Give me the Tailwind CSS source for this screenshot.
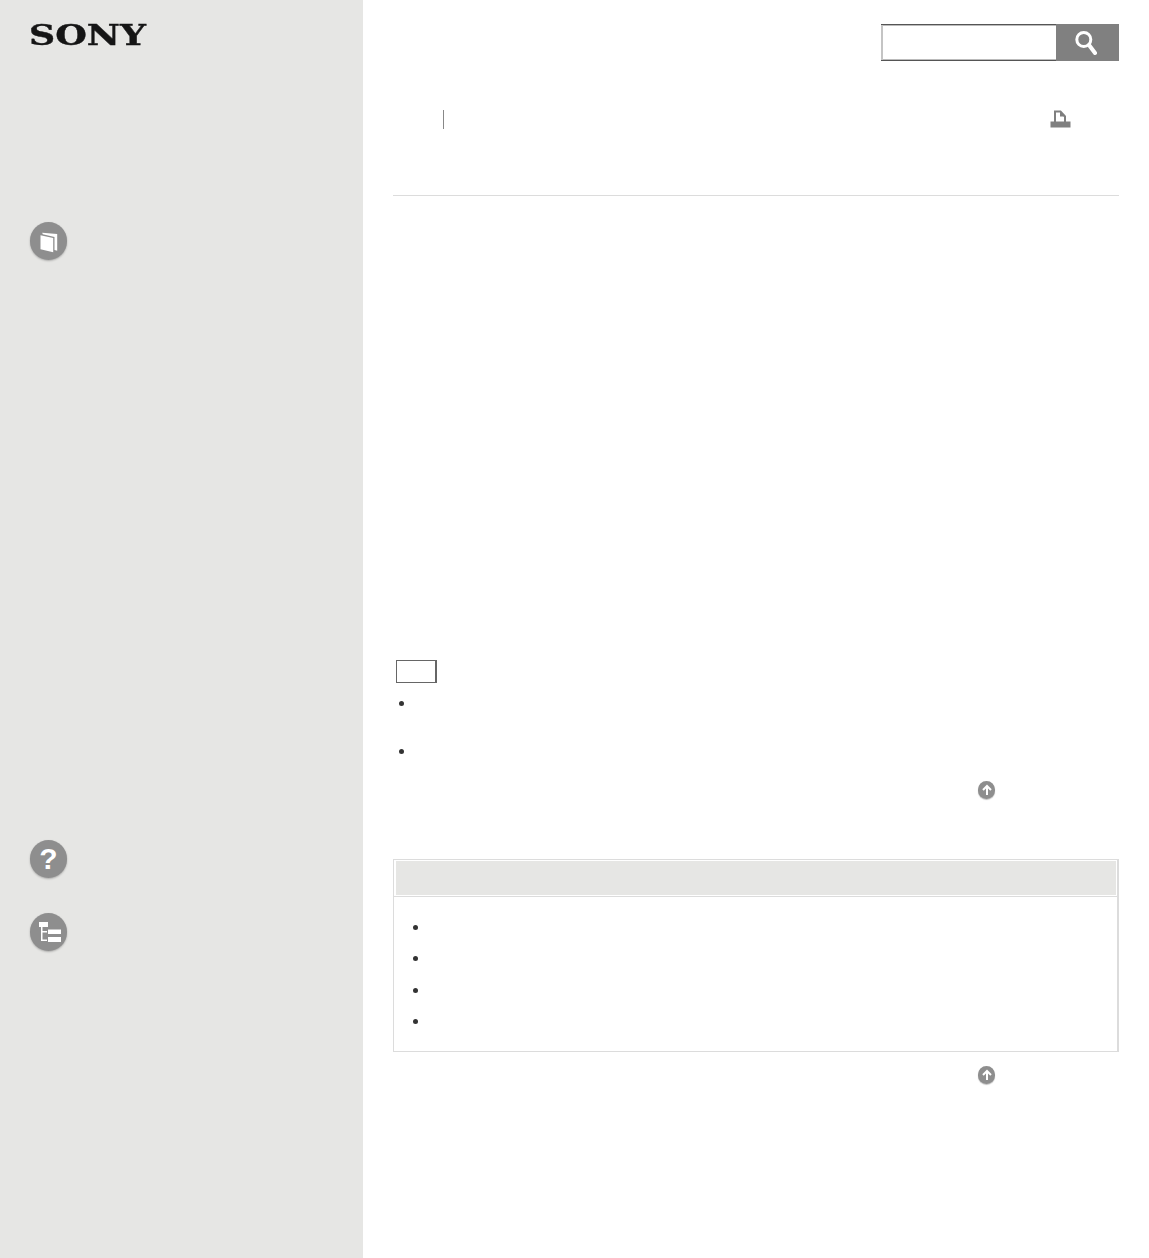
<!DOCTYPE html>
<html lang="en">
  <head>
    <meta charset="UTF-8" />
    <meta name="viewport" content="width=device-width, initial-scale=1.0" />
    <title>Help Guide</title>
    <script src="https://cdn.jsdelivr.net/npm/@tailwindcss/browser@4"></script>
  </head>
  <body class="bg-white">
    <div class="flex h-[1258px] w-[1149px] overflow-hidden">
      <!-- Sidebar -->
      <aside class="w-[363px] shrink-0 bg-[#e6e6e4] pl-[30px] pt-[20px] flex flex-col items-start">
        <div class="-ml-px h-[32px] w-[118px] font-['DejaVu_Serif',serif] font-bold text-[30px] leading-[32px] text-[#151515] origin-left scale-x-[1.21] scale-y-[0.95] blur-[0.3px] [-webkit-text-stroke:0.4px_#151515]">SONY</div>
        <!-- Manual -->
        <div class="mt-[170px] w-[37px] h-[38px] rounded-full bg-[#8e8e8e] shadow-[0_1px_2px_rgba(0,0,0,0.25)] flex items-center justify-center">
          <svg class="w-[20px] h-[24px] blur-[0.3px]" viewBox="0 0 20 24" fill="#fff">
            <path d="M1.5 6.3 L14.2 9 L14.2 23.3 L1.5 20.3 Z" />
            <path d="M3.2 3.7 L18.2 5 L18.2 21.7 L15.5 21 L15.5 8 L3.8 5.3 Z" />
          </svg>
        </div>
        <!-- Troubleshooting -->
        <div class="mt-[580px] w-[37px] h-[38px] rounded-full bg-[#8e8e8e] shadow-[0_1px_2px_rgba(0,0,0,0.25)] flex items-center justify-center font-['Liberation_Sans',sans-serif] font-bold text-[30px] leading-none text-white">?</div>
        <!-- Site map -->
        <div class="mt-[35px] w-[37px] h-[38px] rounded-full bg-[#8e8e8e] shadow-[0_1px_2px_rgba(0,0,0,0.25)] flex items-center justify-center">
          <svg class="w-[26px] h-[24px] blur-[0.3px]" viewBox="0 0 26 24" fill="#fff">
            <rect x="3" y="2" width="9" height="5" />
            <rect x="5" y="7" width="1.5" height="14" />
            <rect x="5" y="11" width="6" height="1.5" />
            <rect x="5" y="19.5" width="6" height="1.5" />
            <rect x="12" y="9.5" width="13" height="4.5" />
            <rect x="12" y="17" width="13" height="5" />
          </svg>
        </div>
      </aside>

      <!-- Main -->
      <main class="flex-1 pl-[30px] pr-[30px] pt-[24px]">
        <div class="flex justify-end">
          <div class="flex h-[37px] w-[238px] border-t border-b border-[#555]">
            <div class="flex-1 bg-white border-l-2 border-l-[#c4c4c4] shadow-[inset_0_1px_0_#bbb,inset_0_-1px_0_#bbb]"></div>
            <div class="w-[63px] -my-px bg-[#808080] flex items-center justify-center">
              <svg class="w-[26px] h-[28px] blur-[0.3px]" viewBox="0 0 26 28" fill="none" stroke="#fff">
                <circle cx="8.8" cy="10.5" r="7" stroke-width="3" />
                <path d="M14 16 L20 24" stroke-width="4" stroke-linecap="round" />
              </svg>
            </div>
          </div>
        </div>

        <div class="mt-[49px] h-[19px] flex items-center justify-between">
          <div class="ml-[50px] w-px h-[19px] bg-[#888]"></div>
          <svg class="mr-[48px] w-[21px] h-[19px] blur-[0.3px]" viewBox="0 0 21 19">
            <path d="M5 12 V1.5 H10.5 L15 6.5 V12" fill="#fff" stroke="#7f7f7f" stroke-width="2" />
            <path d="M10 1.5 V6.5 H15 Z" fill="#7f7f7f" />
            <rect x="0.5" y="11.5" width="20" height="6" fill="#808080" />
          </svg>
        </div>

        <div class="mt-[66px] h-px bg-[#dcdcdc]"></div>

        <!-- Hint -->
        <div class="mt-[464px] ml-[3px] w-[41px] h-[23px] border border-[#666] border-r-2"></div>
        <ul class="mt-[18px] ml-[6px]">
          <li class="h-[48px]"><span class="block w-[5px] h-[5px] rounded-full bg-[#333]"></span></li>
          <li class="h-[24px]"><span class="block w-[5px] h-[5px] rounded-full bg-[#333]"></span></li>
        </ul>
        <div class="mt-[8px] ml-[585px] w-[17px] h-[18px] rounded-full bg-[#8e8e8e] shadow-[0_1px_1px_rgba(0,0,0,0.25)] flex items-center justify-center">
          <svg class="w-[12px] h-[12px] blur-[0.3px]" viewBox="0 0 12 12" fill="none" stroke="#fff" stroke-width="2">
            <path d="M6 11 V2 M2 6 L6 2 L10 6" />
          </svg>
        </div>

        <!-- Related topics -->
        <section class="mt-[60px] h-[193px] border border-r-2 border-[#dcdcdc] pl-[2px] pr-px pt-px">
          <div class="h-[34px] bg-[#e6e6e4]"></div>
          <div class="-ml-[2px] -mr-px mt-px border-t border-[#dcdcdc] pl-[19px] pt-[28px]">
            <ul class="flex flex-col gap-[26.3px]">
              <li><span class="block w-[5px] h-[5px] rounded-full bg-[#333]"></span></li>
              <li><span class="block w-[5px] h-[5px] rounded-full bg-[#333]"></span></li>
              <li><span class="block w-[5px] h-[5px] rounded-full bg-[#333]"></span></li>
              <li><span class="block w-[5px] h-[5px] rounded-full bg-[#333]"></span></li>
            </ul>
          </div>
        </section>
        <div class="mt-[14px] ml-[585px] w-[17px] h-[18px] rounded-full bg-[#8e8e8e] shadow-[0_1px_1px_rgba(0,0,0,0.25)] flex items-center justify-center">
          <svg class="w-[12px] h-[12px] blur-[0.3px]" viewBox="0 0 12 12" fill="none" stroke="#fff" stroke-width="2">
            <path d="M6 11 V2 M2 6 L6 2 L10 6" />
          </svg>
        </div>
      </main>
    </div>
  </body>
</html>
